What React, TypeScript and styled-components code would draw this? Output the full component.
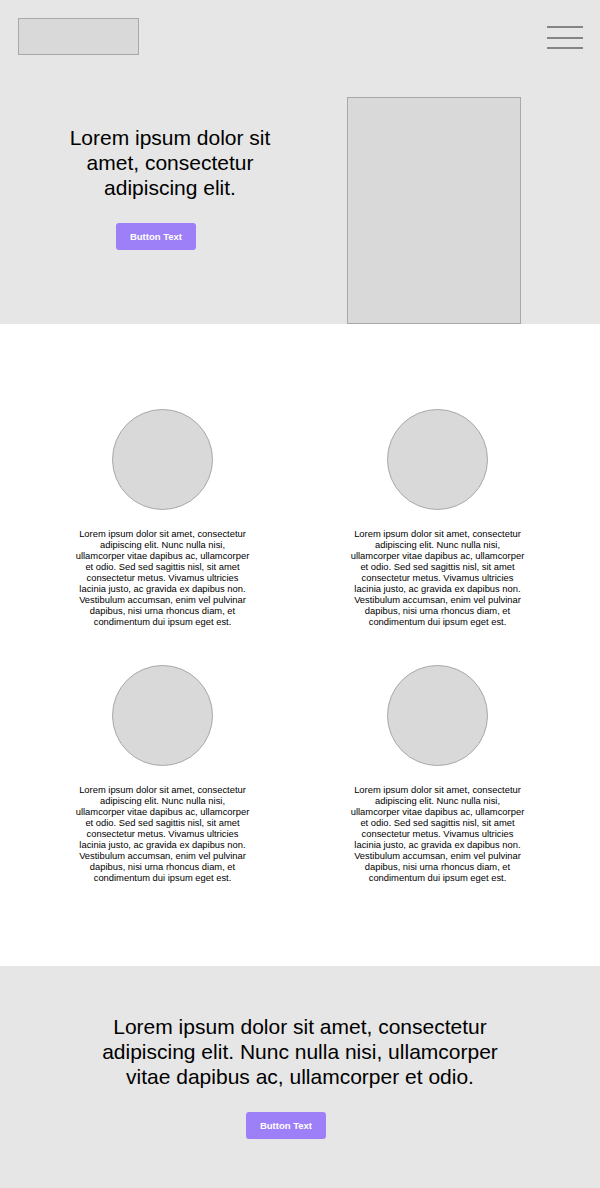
import React from "react";
import styled, { createGlobalStyle } from "styled-components";

const Global = createGlobalStyle`
  html, body { margin: 0; padding: 0; background: #ffffff; }
  body { font-family: "Liberation Sans", Arial, Helvetica, sans-serif; color: #000; }
  * { box-sizing: border-box; }
`;

const Page = styled.div`
  width: 600px;
  display: flex;
  flex-direction: column;
`;

const Hero = styled.section`
  background: #e6e6e6;
  height: 324px;
  display: flex;
  flex-direction: column;
`;

const TopBar = styled.header`
  display: flex;
  justify-content: space-between;
  align-items: flex-start;
  padding: 18px 17px 0 18px;
`;

const LogoBox = styled.div`
  width: 121px;
  height: 37px;
  background: #d9d9d9;
  border: 1px solid #a8a8a8;
`;

const Burger = styled.button`
  width: 36px;
  height: 23px;
  margin-top: 8px;
  padding: 0;
  border: 0;
  background: transparent;
  display: flex;
  flex-direction: column;
  justify-content: space-between;
`;

const BurgerLine = styled.span`
  display: block;
  width: 36px;
  height: 2px;
  background: #858585;
`;

const HeroBody = styled.div`
  flex: 1;
  display: flex;
  margin-top: 42px;
`;

const HeroCopy = styled.div`
  width: 340px;
  display: flex;
  flex-direction: column;
  align-items: center;
  padding-top: 28px;
`;

const Headline = styled.h1<{ $width: number }>`
  margin: 0;
  width: ${(p) => p.$width}px;
  font-size: 21px;
  line-height: 25px;
  font-weight: 400;
  text-align: center;
`;

const Button = styled.button<{ $gap: number }>`
  margin-top: ${(p) => p.$gap}px;
  margin-right: 28px;
  width: 80px;
  height: 27px;
  border: 0;
  border-radius: 3px;
  background: #9d80f7;
  color: #ffffff;
  font-family: "Liberation Sans", Arial, sans-serif;
  font-weight: 700;
  font-size: 9.5px;
  padding: 0;
`;

const HeroImage = styled.div`
  margin-left: 7px;
  width: 174px;
  background: #d9d9d9;
  border: 1px solid #a8a8a8;
`;

const Features = styled.section`
  background: #ffffff;
  padding: 85px 25px 83px;
  display: grid;
  grid-template-columns: 1fr 1fr;
  row-gap: 38px;
`;

const Card = styled.div`
  display: flex;
  flex-direction: column;
  align-items: center;
`;

const Circle = styled.div`
  width: 101px;
  height: 101px;
  border-radius: 50%;
  background: #d9d9d9;
  border: 1px solid #a8a8a8;
`;

const CardText = styled.p`
  margin: 18px 0 0;
  width: 176px;
  font-size: 9.4px;
  line-height: 11px;
  text-align: center;
`;

const Footer = styled.section`
  background: #e6e6e6;
  height: 222px;
  display: flex;
  flex-direction: column;
  align-items: center;
  padding-top: 48px;
`;

const FooterCopy = styled.div`
  display: flex;
  flex-direction: column;
  align-items: center;
`;

const cardText =
  "Lorem ipsum dolor sit amet, consectetur adipiscing elit. Nunc nulla nisi, ullamcorper vitae dapibus ac, ullamcorper et odio. Sed sed sagittis nisl, sit amet consectetur metus. Vivamus ultricies lacinia justo, ac gravida ex dapibus non. Vestibulum accumsan, enim vel pulvinar dapibus, nisi urna rhoncus diam, et condimentum dui ipsum eget est.";

export default function App() {
  return (
    <Page>
      <Global />
      <Hero>
        <TopBar>
          <LogoBox />
          <Burger aria-label="Menu">
            <BurgerLine />
            <BurgerLine />
            <BurgerLine />
          </Burger>
        </TopBar>
        <HeroBody>
          <HeroCopy>
            <Headline $width={230}>
              Lorem ipsum dolor sit amet, consectetur adipiscing elit.
            </Headline>
            <Button $gap={23}>Button Text</Button>
          </HeroCopy>
          <HeroImage />
        </HeroBody>
      </Hero>
      <Features>
        {[0, 1, 2, 3].map((i) => (
          <Card key={i}>
            <Circle />
            <CardText>{cardText}</CardText>
          </Card>
        ))}
      </Features>
      <Footer>
        <FooterCopy>
          <Headline $width={420}>
            Lorem ipsum dolor sit amet, consectetur adipiscing elit. Nunc nulla
            nisi, ullamcorper vitae dapibus ac, ullamcorper et odio.
          </Headline>
          <Button $gap={23}>Button Text</Button>
        </FooterCopy>
      </Footer>
    </Page>
  );
}
